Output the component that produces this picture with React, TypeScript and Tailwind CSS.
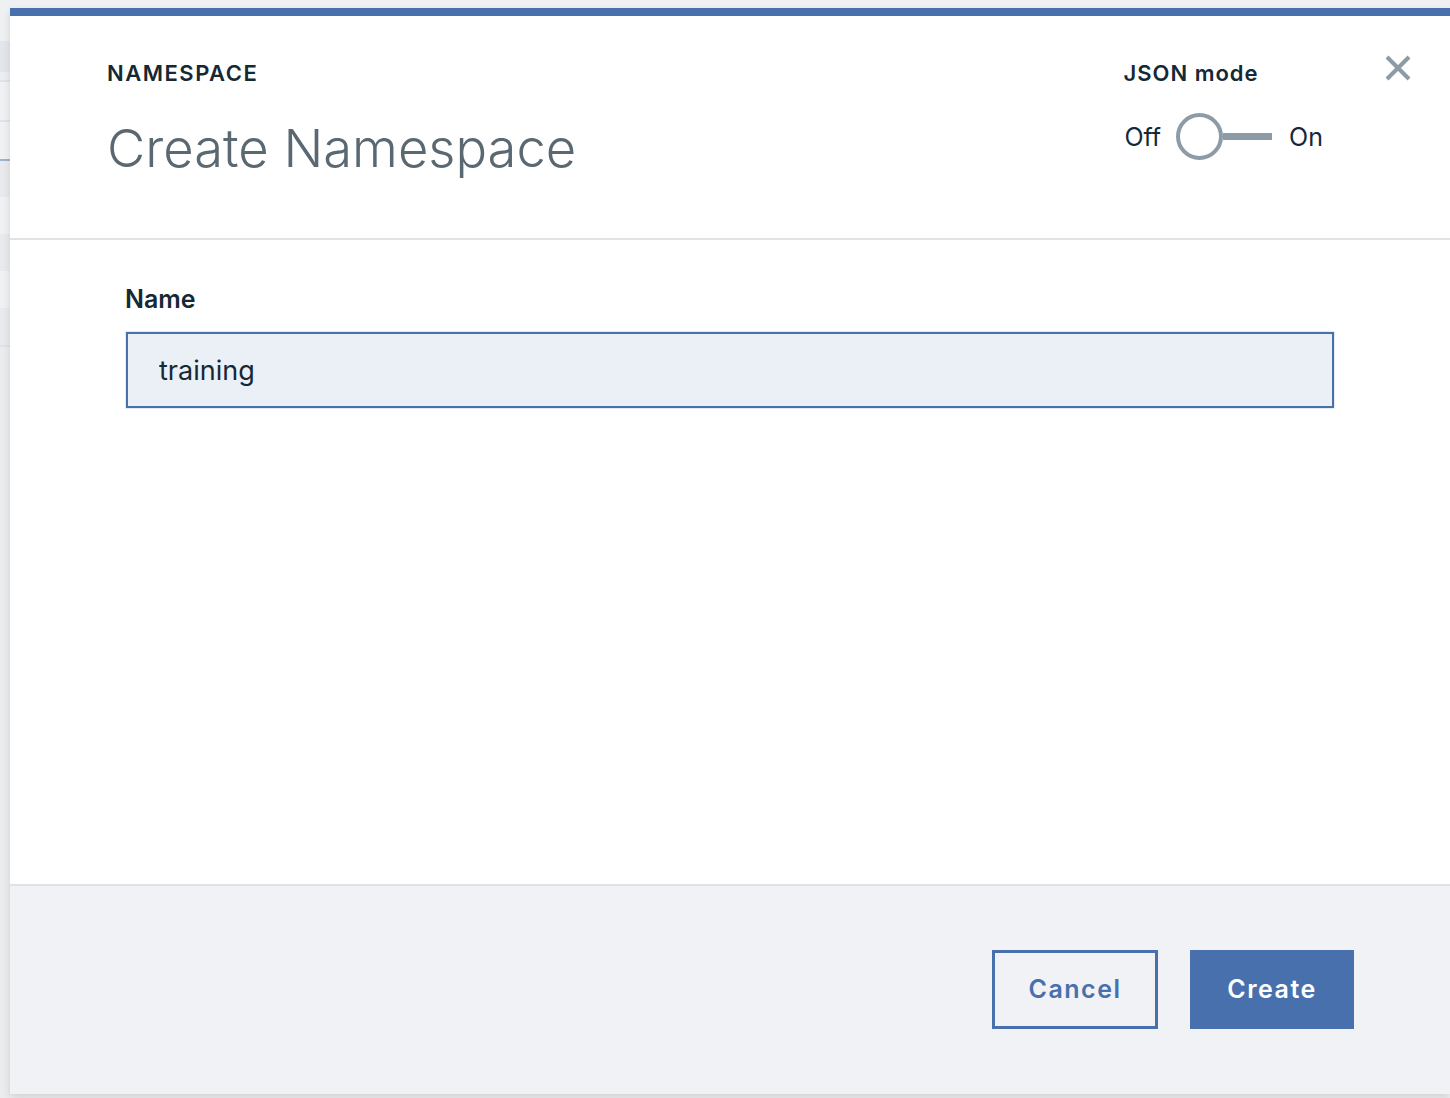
import React from 'react'

const font = { fontFamily: '"Inter", "Noto Sans", "Liberation Sans", sans-serif' }

export default function App() {
  return (
    <div className="relative flex h-[1098px] w-[1450px] overflow-hidden bg-[#eef0f2]" style={font}>
      {/* page behind the modal */}
      <div className="flex w-[10px] shrink-0 flex-col">
        <div className="h-[41px] bg-[#eff0f2]" />
        <div className="h-[31px] bg-[#e3e6eb]" />
        <div className="h-[8px] bg-[#eceef1]" />
        <div className="h-[2px] bg-[#dfe2e6]" />
        <div className="h-[38px] bg-[#eff1f3]" />
        <div className="h-[2px] bg-[#dfe2e6]" />
        <div className="h-[37px] bg-[#eff1f3]" />
        <div className="h-[2px] bg-[#9fb2cd]" />
        <div className="h-[36px] bg-[#e8eaed]" />
        <div className="h-[37px] bg-[#eff1f3]" />
        <div className="h-[37px] bg-[#e8eaed]" />
        <div className="h-[37px] bg-[#eff1f3]" />
        <div className="h-[37px] bg-[#e8eaed]" />
        <div className="h-[2px] bg-[#dfe2e6]" />
        <div className="flex-1 bg-[#ebecee]" />
      </div>

      {/* modal */}
      <div className="mt-[8px] flex h-[1086px] flex-1 flex-col border-t-[8px] border-[#4870ac] bg-white shadow-[0_4px_8px_rgba(0,0,0,0.12)]">
        {/* header */}
        <div className="relative flex h-[224px] shrink-0 justify-between border-b-2 border-[#dfe3e6] pl-[97px] pr-[127px] pt-[42px]">
          <div>
            <div className="text-[22px] font-semibold leading-[30px] tracking-[1.5px] text-[#152935]">NAMESPACE</div>
            <h1 className="mt-[28px] text-[52.5px] font-light leading-[64px] text-[#5a6872]">Create Namespace</h1>
          </div>
          <div>
            <div className="ml-[-10px] text-[22px] font-semibold leading-[30px] tracking-[1px] text-[#152935]">JSON mode</div>
            <div className="ml-[-9px] mt-[25px] flex items-center">
              <span className="text-[25px] leading-[30px] text-[#152935]">Off</span>
              <div className="ml-[15px] flex items-center">
                <div className="h-[47px] w-[47px] rounded-full border-4 border-[#8c9ba5] bg-white" />
                <div className="h-[7px] w-[49px] bg-[#8c9ba5]" />
              </div>
              <span className="ml-[17px] text-[25px] leading-[30px] text-[#152935]">On</span>
            </div>
          </div>
          <button className="absolute right-[39px] top-[39px] flex h-[26px] w-[26px] items-center justify-center">
            <svg width="26" height="26" viewBox="0 0 26 26">
              <path d="M2 2 L24 24 M24 2 L2 24" stroke="#8c9ba5" strokeWidth="4" />
            </svg>
          </button>
        </div>

        {/* body */}
        <div className="flex-1 pl-[115px] pr-[115px] pt-[44px]">
          <label className="block text-[25px] font-semibold leading-[30px] text-[#152935]">Name</label>
          <div className="mt-[17px] border border-[#e6ebf2]">
            <input
              readOnly
              value="training"
              className="h-[76px] w-full border-2 border-[#4870ac] bg-[#ebf0f7] px-[31px] text-[27px] text-[#152935] outline-none"
              style={font}
            />
          </div>
        </div>

        {/* footer */}
        <div className="flex h-[210px] shrink-0 items-start justify-end border-t-2 border-[#dfe3e6] bg-[#f0f2f6] pr-[96px] pt-[64px]">
          <button className="flex h-[79px] w-[166px] items-center justify-center border-[3px] border-[#4870ac] text-[25px] font-semibold tracking-[1.5px] text-[#4870ac]">
            Cancel
          </button>
          <button className="ml-[32px] flex h-[79px] w-[164px] items-center justify-center bg-[#4870ac] text-[25px] font-semibold tracking-[1.5px] text-white">
            Create
          </button>
        </div>
      </div>
    </div>
  )
}
